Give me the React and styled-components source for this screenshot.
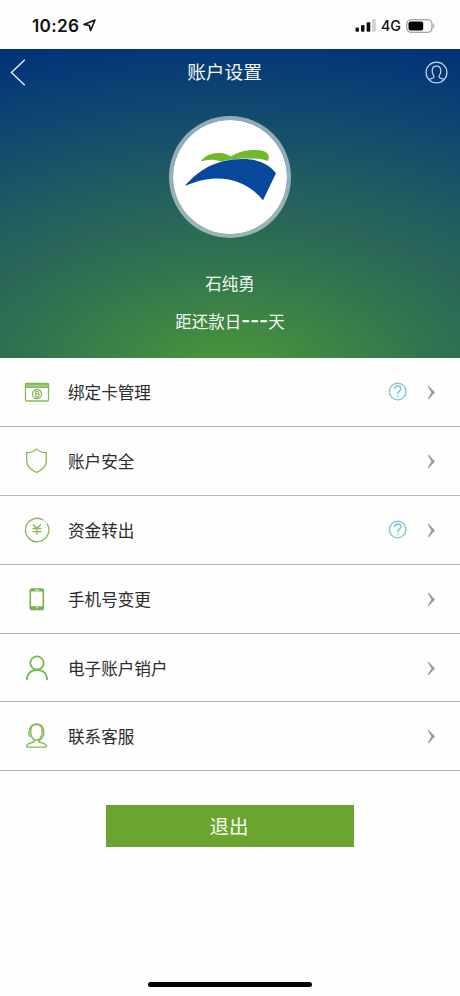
import React from 'react';
import styled, { createGlobalStyle } from 'styled-components';

const GlobalStyle = createGlobalStyle`
  *, *::before, *::after { box-sizing: border-box; }
  body {
    margin: 0;
    background: #fff;
    font-family: "Noto Sans CJK SC", sans-serif;
  }
`;

const Screen = styled.div`
  width: 460px;
  height: 996px;
  display: flex;
  flex-direction: column;
  background: #fefefe;
  overflow: hidden;
`;

const StatusBar = styled.header`
  height: 49px;
  flex: none;
  display: flex;
  align-items: center;
  justify-content: space-between;
  padding: 2px 24px 0 32px;
  color: #111;
  font-family: Inter, sans-serif;
`;

const Clock = styled.div`
  display: flex;
  align-items: center;
  gap: 4px;
  font-size: 17.2px;
  font-weight: 600;
  letter-spacing: 0.3px;
`;

const Signals = styled.div`
  display: flex;
  align-items: center;
  gap: 5px;
  font-size: 14.3px;
  font-weight: 500;
`;

const Hero = styled.section`
  height: 309px;
  flex: none;
  display: flex;
  flex-direction: column;
  align-items: center;
  color: #f4faf4;
  background: radial-gradient(740px 400px at 230px 325px,
    #4a933b 0%, #458f3e 7%, #3b8048 18%, #31734f 28%, #296659 39%,
    #205b61 50%, #174f6a 60%, #0e4471 70%, #063a77 79%, #00307a 87%);
`;

const NavBar = styled.nav`
  width: 100%;
  height: 46px;
  display: flex;
  align-items: center;
  justify-content: space-between;
  padding: 0 12px 0 10px;
`;

const NavTitle = styled.h1`
  margin: 0 9px 2px 0;
  font-size: 18.7px;
  line-height: 28px;
  font-weight: 400;
`;

const NavSlot = styled.div`
  width: 26px;
  display: flex;
  justify-content: ${({ $end }) => ($end ? 'flex-end' : 'flex-start')};
`;

const Avatar = styled.div`
  width: 122px;
  height: 122px;
  margin-top: 21px;
  flex: none;
  border: 4px solid rgba(205, 216, 224, 0.68);
  border-radius: 50%;
  background: #fff padding-box;
`;

const UserName = styled.div`
  margin-top: 33px;
  font-size: 16.5px;
  line-height: 24px;
`;

const DueText = styled.div`
  display: flex;
  margin-top: 14px;
  font-size: 16.5px;
  line-height: 24px;
`;

const Dashes = styled.span`
  font-family: Inter, sans-serif;
  font-weight: 700;
  font-size: 19px;
  letter-spacing: 0.1px;
`;

const Menu = styled.ul`
  list-style: none;
  margin: 0;
  padding: 0;
`;

const MenuRow = styled.li`
  height: 68.9px;
  display: flex;
  align-items: center;
  padding: 0 24px 0 22px;
  border-bottom: 1px solid #b4b4b4;
`;

const MenuIcon = styled.span`
  width: 30px;
  height: 30px;
  margin-right: 16px;
  flex: none;
`;

const MenuLabel = styled.span`
  flex: 1;
  font-size: 16.6px;
  line-height: 24px;
  color: #2c2c2c;
`;

const HelpSlot = styled.span`
  display: flex;
  margin-right: 20px;
`;

const ExitButton = styled.button`
  width: 248px;
  height: 42px;
  margin: 33.6px auto 0 106px;
  padding: 0 2px 0 0;
  flex: none;
  border: 0;
  background: #6aa52f;
  color: #f8fcf2;
  font-family: inherit;
  font-size: 19.5px;
  line-height: 40px;
`;

const HomeIndicator = styled.div`
  width: 164px;
  height: 5px;
  margin: auto auto 9px 148px;
  border-radius: 3px;
  background: #000;
`;

const Glyph = styled.svg`
  display: block;
  fill: none;
  stroke: ${({ $color }) => $color || '#86b957'};
  stroke-width: ${({ $weight }) => $weight || 1.3};
  overflow: visible;
`;

const LocationArrow = () => (
  <Glyph width="13" height="13" viewBox="0 0 13 13" $color="#111" $weight="1.6">
    <path d="M1 5.4 12 1 7.6 11.5 6.4 6.5Z" strokeLinejoin="round" />
  </Glyph>
);

const SignalBars = () => (
  <Glyph width="21" height="13" viewBox="0 0 21 13" $color="none">
    <g fill="#111">
      <rect x="0.5" y="8.5" width="3.5" height="4.2" rx="1" />
      <rect x="6" y="6" width="3.5" height="6.7" rx="1" />
      <rect x="11.6" y="3.2" width="3.7" height="9.5" rx="1" />
    </g>
    <rect x="17.2" y="0" width="3.6" height="12.7" rx="1" fill="#d0d0d0" />
  </Glyph>
);

const Battery = () => (
  <Glyph width="30" height="14" viewBox="0 0 30 14" $color="#8b8b8b" $weight="1.1">
    <rect x="0.8" y="0.7" width="25.2" height="12.6" rx="4" />
    <rect x="2.5" y="2.5" width="14.7" height="9" rx="2" fill="#000" stroke="none" />
    <path d="M27.4 4.5q2 2.5 0 5Z" fill="#8b8b8b" stroke="none" />
  </Glyph>
);

const BackArrow = () => (
  <Glyph width="16" height="27" viewBox="0 0 16 27" $color="#f1f6fa">
    <path d="M14.8.8 1.4 13.5 14.8 26.2" />
  </Glyph>
);

const ProfileIcon = () => (
  <Glyph width="23" height="23" viewBox="0 0 23 23" $color="#bed6ee" $weight="1.25">
    <circle cx="11.5" cy="11.5" r="10.4" />
    <path d="M4.2 18.8c1.2-1.5 4.3-1.4 4.7-2.7.3-1-.2-1.6-.8-2.5-.7-1.1-.9-2.3-.9-4.1 0-2.8 1.7-4.5 4.3-4.5s4.3 1.7 4.3 4.5c0 1.8-.2 3-.9 4.1-.6.9-1.1 1.5-.8 2.5.4 1.3 3.5 1.2 4.7 2.7" />
  </Glyph>
);

const BankLogo = () => (
  <Glyph width="114" height="114" viewBox="173 120 114 114" $color="none">
    <path fill="#71b82b" d="M200.5 161.5C205 155.5 212 152.8 219 153c5 .1 8.5 1.5 12 3.4C239 151 249 149.7 256 149.9c8 .2 12.2 2.6 12.7 6.2.2 2-.2 3.4-.8 5-8-3.1-22-3.4-38-1.4-3.2.4-6.5 1.1-9.5 1.8-5.9-2.7-12-2.2-19.9 0Z" />
    <path fill="#07479c" d="M184.8 186C199 170 215 159.3 243 159c15-.2 26.5 5.8 33 14.2L263 200.2C247 180.5 220 170.5 184.8 186Z" />
  </Glyph>
);

const Chevron = () => (
  <Glyph width="8" height="14" viewBox="0 0 8 14" $color="none">
    <path d="M-.3 1.3.8.9 7 7.5.8 14.100-.3 13.700 3.500 7.500Z" fill="#999" />
  </Glyph>
);

const HelpIcon = () => (
  <Glyph width="19" height="19" viewBox="0 0 19 19" $color="#7bc6ce" $weight="1.35">
    <circle cx="8.7" cy="9.5" r="8.3" />
    <path d="M5.5 7.2c.1-2.1 1.3-3.2 3.2-3.2s3.2 1.1 3.2 2.8c0 2.3-3.2 2.4-3.2 5.1M8.7 13.5v1.5" />
  </Glyph>
);

const CardIcon = () => (
  <Glyph width="30" height="30" viewBox="0 0 30 30">
    <rect x="3.5" y="6.4" width="23" height="17.6" rx="1.3" />
    <path d="M3.5 7h23v3.4h-23z" fill="#a9cb8a" />
    <circle cx="15" cy="17" r="4.5" />
    <path d="M13.7 14.5h1.7c2 0 2 2.3 0 2.4 2.5 0 2.4 2.7 0 2.7h-1.7ZM13.7 16.9h1.9" strokeWidth="1.1" />
  </Glyph>
);

const ShieldIcon = () => (
  <Glyph width="30" height="30" viewBox="0 0 30 30">
    <path d="M14.5 3.1c2.6 2.5 6 3.5 9.8 3.6v8.3c0 5.2-4 8.8-9.8 11.3-5.8-2.5-9.800-6.100-9.800-11.300V6.700c3.800-.1 7.200-1.100 9.800-3.600Z" />
  </Glyph>
);

const YuanIcon = () => (
  <Glyph width="30" height="30" viewBox="0 0 30 30">
    <path d="M24.8 8.4A11.7 11.7 0 1 1 21.5 5.2M23 6.3l.6.6" />
    <path d="m10.9 9.6 4 3.7 4-3.7M10.4 13.5h9M10.4 16.7h9M14.9 13.3V20" />
  </Glyph>
);

const PhoneIcon = () => (
  <Glyph width="30" height="30" viewBox="0 0 30 30" $color="#76b14c" $weight="1.6">
    <rect x="8.3" y="5" width="13" height="20.5" rx="1.8" />
    <path d="M8.3 6.3h13M8.3 23.6h13" strokeWidth="2.6" />
    <path d="M13 6.200h4M14 23.800h2" stroke="#fff" strokeWidth="0.900" />
  </Glyph>
);

const PersonIcon = () => (
  <Glyph width="30" height="30" viewBox="0 0 30 30" $color="#7bb752" $weight="1.8">
    <circle cx="15" cy="10" r="6.700" />
    <path d="M4.900 27c0-6.400 4.200-10 10.100-10s10.100 3.600 10.100 10" />
  </Glyph>
);

const AgentIcon = () => (
  <Glyph width="30" height="30" viewBox="0 0 30 30" $weight="1.4">
    <path d="M8.800 13.500V9.100c0-3.400 2.200-5.600 5.600-5.600S20 5.700 20 9.100v4.400c-.8 3.400-2.900 5.600-5.600 5.600s-4.800-2.200-5.600-5.600Z" />
    <path d="M8.800 8.800c-1.400.2-1.900 1-1.900 2.100v2.500c0 1.200.7 1.900 1.900 2M20 8.800c1.400.2 1.900 1 1.900 2.100v2.500c0 1.200-.7 1.900-1.900 2M7.500 9C8 .9 21.300.9 21.700 9M20.500 15c-.3 2.700-2 4.100-4.500 4.100" />
    <path d="M12 18.700v1.900c-1.900 1.500-7.300 1.600-7.500 4.700 0 .5.300.8.800.8h18.400c.5 0 .8-.3.800-.8-.1-3.100-5.600-3.200-7.500-4.700v-1.900" />
  </Glyph>
);

const menuItems = [
  { label: '绑定卡管理', Icon: CardIcon, help: true },
  { label: '账户安全', Icon: ShieldIcon },
  { label: '资金转出', Icon: YuanIcon, help: true },
  { label: '手机号变更', Icon: PhoneIcon },
  { label: '电子账户销户', Icon: PersonIcon },
  { label: '联系客服', Icon: AgentIcon },
];

export default function App() {
  return (
    <>
      <GlobalStyle />
      <Screen>
        <StatusBar>
          <Clock>10:26<LocationArrow /></Clock>
          <Signals><SignalBars />4G<Battery /></Signals>
        </StatusBar>
        <Hero>
          <NavBar>
            <NavSlot><BackArrow /></NavSlot>
            <NavTitle>账户设置</NavTitle>
            <NavSlot $end><ProfileIcon /></NavSlot>
          </NavBar>
          <Avatar><BankLogo /></Avatar>
          <UserName>石纯勇</UserName>
          <DueText>距还款日<Dashes>---</Dashes>天</DueText>
        </Hero>
        <Menu>
          {menuItems.map(({ label, Icon, help }) => (
            <MenuRow key={label}>
              <MenuIcon><Icon /></MenuIcon>
              <MenuLabel>{label}</MenuLabel>
              {help && <HelpSlot><HelpIcon /></HelpSlot>}
              <Chevron />
            </MenuRow>
          ))}
        </Menu>
        <ExitButton type="button">退出</ExitButton>
        <HomeIndicator />
      </Screen>
    </>
  );
}
